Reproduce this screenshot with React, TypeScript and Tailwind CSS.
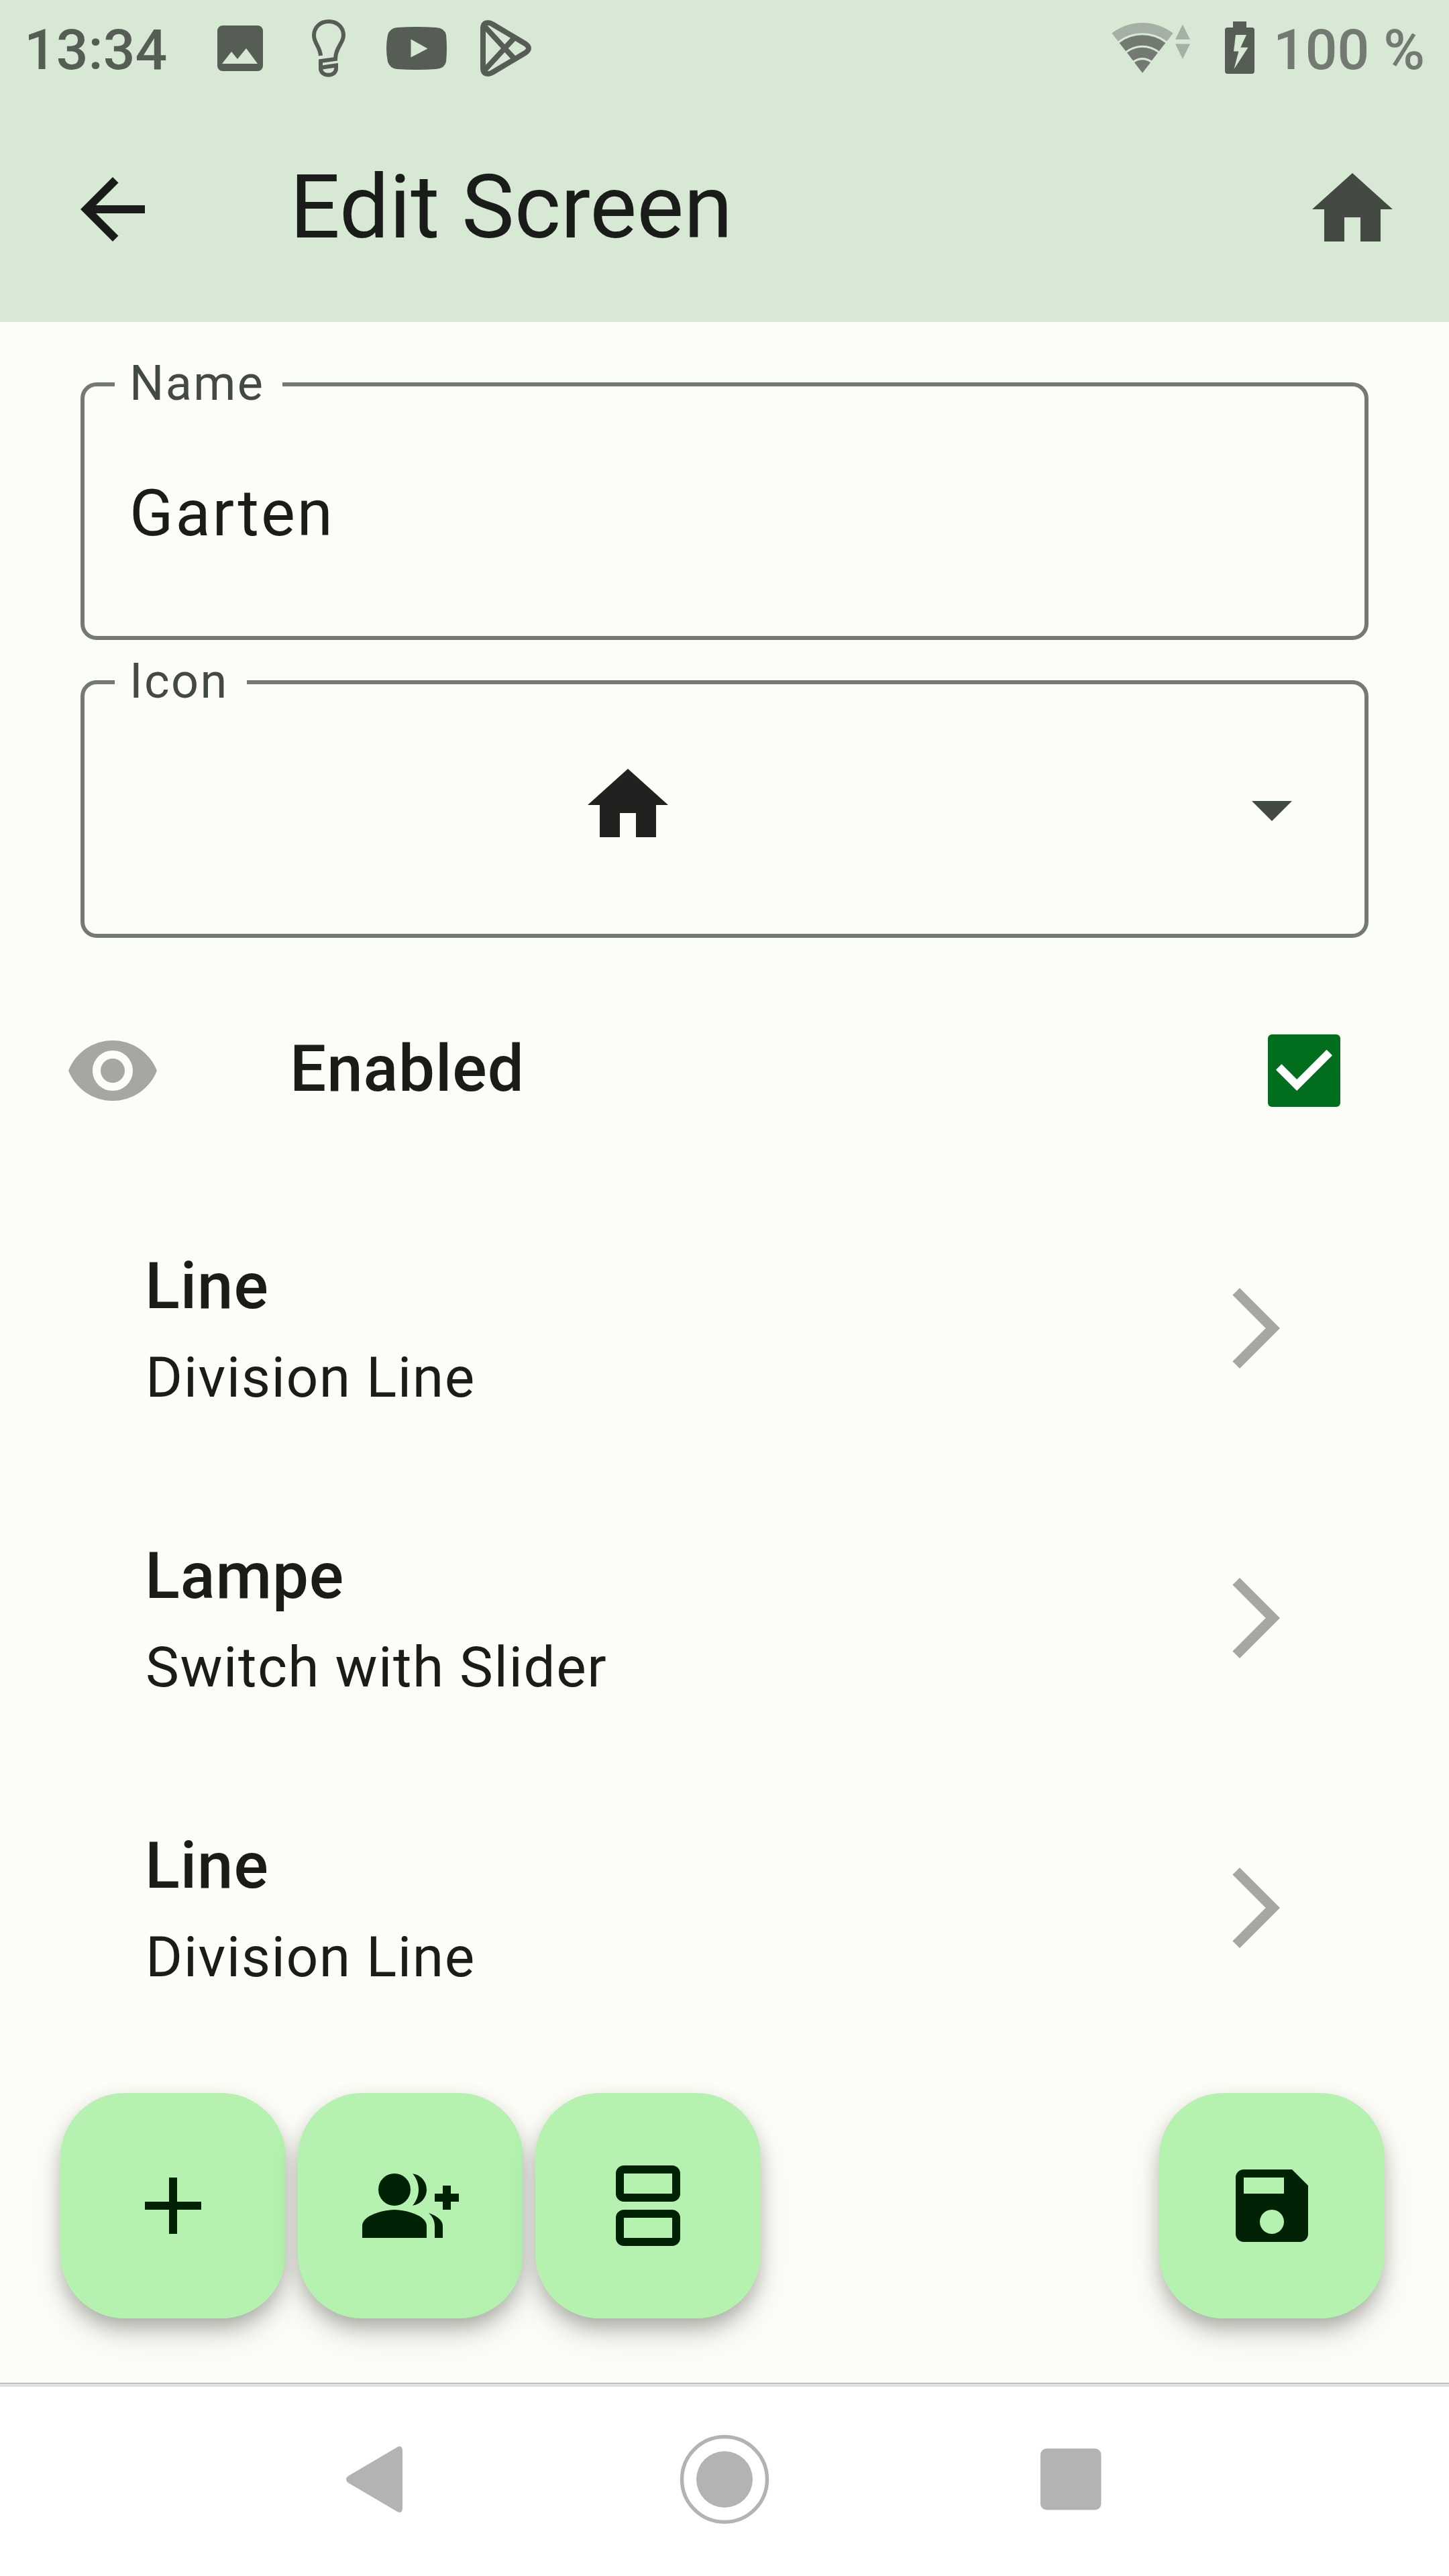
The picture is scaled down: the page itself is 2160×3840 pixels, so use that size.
import type { ReactNode } from "react";

function Icon({ d, className }: { d: string; className: string }) {
  return (
    <svg viewBox="0 0 24 24" fill="currentColor" className={`size-36 shrink-0 ${className}`}>
      <path d={d} />
    </svg>
  );
}

const HOME = "M10 20v-6h4v6h5v-8h3L12 3 2 12h3v8z";
const BACK = "M20 11H7.83l5.59-5.59L12 4l-8 8 8 8 1.41-1.41L7.83 13H20v-2z";
const EYE =
  "M12 4.5C7 4.5 2.73 7.61 1 12c1.73 4.39 6 7.5 11 7.5s9.27-3.11 11-7.5c-1.73-4.39-6-7.5-11-7.5zM12 17c-2.76 0-5-2.24-5-5s2.24-5 5-5 5 2.24 5 5-2.24 5-5 5zm0-8c-1.66 0-3 1.34-3 3s1.34 3 3 3 3-1.34 3-3-1.34-3-3-3z";
const FORWARD = "M6.23 20.23L8 22l10-10L8 2 6.23 3.77 14.46 12z";
const ADD = "M19 13h-6v6h-2v-6H5v-2h6V5h2v6h6v2z";
const GROUP_ADD =
  "M22 9V7h-2v2h-2v2h2v2h2v-2h2V9zM8 4a4 4 0 1 0 0 8 4 4 0 1 0 0-8zM8 13c-2.67 0-8 1.34-8 4v3h16v-3c0-2.66-5.33-4-8-4zM12.51 4.05C13.43 5.11 14 6.49 14 8s-.57 2.89-1.49 3.95C14.47 11.7 16 10.04 16 8s-1.53-3.7-3.49-3.95zM16.53 13.83C17.42 14.66 18 15.7 18 17v3h2v-3c0-1.45-1.59-2.51-3.47-3.17z";
const SPLIT =
  "M18 4v5H6V4h12m0-2H6c-1.1 0-2 .9-2 2v5c0 1.1.9 2 2 2h12c1.1 0 2-.9 2-2V4c0-1.1-.9-2-2-2zm0 13v5H6v-5h12m0-2H6c-1.1 0-2 .9-2 2v5c0 1.1.9 2 2 2h12c1.1 0 2-.9 2-2v-5c0-1.1-.9-2-2-2z";
const SAVE =
  "M17 3H5c-1.11 0-2 .9-2 2v14c0 1.1.89 2 2 2h14c1.1 0 2-.9 2-2V7l-4-4zm-5 16c-1.66 0-3-1.34-3-3s1.34-3 3-3 3 1.34 3 3-1.34 3-3 3zm3-10H5V5h10v4z";

function StatusBar() {
  return (
    <div className="flex h-36 justify-between pr-9 pl-9 text-[84px] leading-[150px] font-medium text-[#565d55]">
      <div className="flex">
        <span className="w-[264px]">13:34</span>
        <svg viewBox="300 0 510 144" className="h-36 w-[510px]" fill="none" stroke="#565d55">
          <path
            fill="#565d55"
            stroke="none"
            fillRule="evenodd"
            d="M332 38h52a8 8 0 0 1 8 8v52a8 8 0 0 1-8 8h-52a8 8 0 0 1-8-8V46a8 8 0 0 1 8-8zM331 95h53L367 72l-13 16-9-11z"
          />
          <path
            strokeWidth="6"
            d="M478 83C477 70 468 64 468 53C468 40 478 32 490 32C502 32 512 40 512 53C512 64 500 71 500 88L478 91V102C478 115 501 115 501 102V97.500L480 100.500"
          />
          <path
            fill="#565d55"
            stroke="none"
            fillRule="evenodd"
            d="M592 41Q621 39 650 41Q663 42 665 52Q667 72 665 92Q663 102 650 103Q621 105 592 103Q581 102 578 92Q574 72 578 52Q581 42 592 41zM612.500 58.500V85.500L637.500 72.500z"
          />
          <path
            strokeWidth="8"
            strokeLinejoin="round"
            d="M720 43Q720 34 728 34Q731 34 734 36L781 64Q788 68 788 72Q788 76 781 80L734 108Q731 110 728 110Q720 110 720 101zM722 39L769 90M722 105L769 54"
          />
        </svg>
      </div>
      <div className="flex text-[#727a71]">
        <svg viewBox="1648 0 250 144" className="h-36 w-[250px]">
          <g fill="#727a71">
            <path fill="#a5b0a5" d="M1657.4 49.5A75 75 0 0 1 1748.6 49.5L1739.3 61.5A59.7 59.7 0 0 0 1666.7 61.5z" />
            <path d="M1668.6 64A56.4 56.4 0 0 1 1737.4 64L1727.8 76.3A40.6 40.6 0 0 0 1678.2 76.3z" />
            <path d="M1680 78.6A37.8 37.8 0 0 1 1726 78.6L1716.8 90.6A22.6 22.6 0 0 0 1689.2 90.6z" />
            <path d="M1691 93.3A19.6 19.6 0 0 1 1715 93.3L1703 108.7z" />
          </g>
          <path fill="#a5b0a5" d="M1752 58.7L1763 36.5L1774 58.7zM1752 65.5H1774L1763 88z" />
          <path
            fill="#565d55"
            fillRule="evenodd"
            d="M1838 32h20v9h8q4 0 4 4v61q0 4-4 4h-36q-4 0-4-4V45q0-4 4-4h8zM1842 52L1839 76.500H1846.400L1839.500 103L1860.500 70.700H1849.300L1858 52z"
          />
        </svg>
        <span>100 %</span>
      </div>
    </div>
  );
}

function Field({ label, children }: { label: string; children: ReactNode }) {
  return (
    <fieldset className="flex h-[410px] rounded-3xl border-6 border-[#727a71] pr-[42px] pl-[45px]">
      <legend className="h-[58px] pr-[27px] pl-[22px] text-[72px] leading-[55px] tracking-[2.4px] text-[#434a42]">
        {label}
      </legend>
      {children}
    </fieldset>
  );
}

function Row({ title, subtitle }: { title: string; subtitle: string }) {
  return (
    <div className="flex h-108 items-center justify-between pr-54 pl-54">
      <div className="pt-[3px]">
        <div className="mb-[10px] text-[96px] leading-[134px] font-medium tracking-[0.9px]">{title}</div>
        <div className="pl-px text-[84px] leading-[120px] tracking-[1.5px]">{subtitle}</div>
      </div>
      <Icon d={FORWARD} className="text-[#a5a8a0]" />
    </div>
  );
}

function Fab({ d }: { d: string }) {
  return (
    <button className="flex size-84 items-center justify-center rounded-[96px] bg-[#b6f2af] text-[#002204] shadow-[0_18px_30px_-6px_rgba(0,0,0,0.22),0_24px_48px_rgba(0,0,0,0.12),0_4px_30px_rgba(0,0,0,0.05)]">
      <Icon d={d} className="" />
    </button>
  );
}

export default function App() {
  return (
    <div className="flex h-[3840px] w-[2160px] flex-col overflow-hidden bg-[#fcfdf6] font-[Roboto,sans-serif] text-[#1a1c19]">
      <header className="h-120 shrink-0 bg-[#d7e8d5]">
        <StatusBar />
        <div className="flex h-84 items-center pr-[72px] pl-24">
          <Icon d={BACK} className="mr-48" />
          <h1 className="grow pb-[6px] text-[132px] leading-[168px]">Edit Screen</h1>
          <Icon d={HOME} className="text-[#434a42]" />
        </div>
      </header>

      <main className="grow">
        <div className="flex flex-col gap-[34px] px-30 pt-16">
          <Field label="Name">
            <span className="pt-[91px] pl-[22px] text-[96px] leading-[144px] tracking-[3px]">Garten</span>
          </Field>
          <Field label="Icon">
            <div className="flex w-full items-start justify-between pt-[82px] pr-6 pl-[693px]">
              <Icon d={HOME} className="text-[#21221f]" />
              <Icon d="M7 10l5 5 5-5z" className="mt-[6px] text-[#434a42]" />
            </div>
          </Field>
        </div>

        <div className="mt-[30px] flex h-84 items-center pr-[162px] pl-24">
          <Icon d={EYE} className="mr-48 text-[#a5a8a0]" />
          <span className="grow pb-[6px] text-[96px] leading-[144px] font-medium tracking-[0.9px]">Enabled</span>
          <svg viewBox="0 0 108 108" className="size-27 rounded-[6px] bg-[#006e1c]">
            <path d="M16.200 48.600L43.200 75.600L91.800 27" fill="none" stroke="#fff" strokeWidth="12" />
          </svg>
        </div>

        <Row title="Line" subtitle="Division Line" />
        <Row title="Lampe" subtitle="Switch with Slider" />
        <Row title="Line" subtitle="Division Line" />

        <div className="mt-15 flex gap-[18px] pr-24 pl-[90px]">
          <Fab d={ADD} />
          <Fab d={GROUP_ADD} />
          <Fab d={SPLIT} />
          <div className="grow" />
          <Fab d={SAVE} />
        </div>
      </main>

      <nav className="h-72 shrink-0 border-t border-[#a0a0a0] bg-white">
        <div className="h-[5px] bg-[#e0e0e0]" />
        <svg viewBox="0 3558 2160 282" className="h-[282px] w-full" fill="#b3b3b3">
          <path d="M519 3691L592 3648Q600 3644 600 3654V3738Q600 3748 592 3744L519 3701Q513 3696 519 3691z" />
          <circle cx="1080" cy="3696" r="42" />
          <circle cx="1080" cy="3696" r="63.500" fill="none" stroke="#b3b3b3" strokeWidth="5.500" />
          <rect x="1551" y="3650" width="90.500" height="91.500" rx="9" />
        </svg>
      </nav>
    </div>
  );
}
